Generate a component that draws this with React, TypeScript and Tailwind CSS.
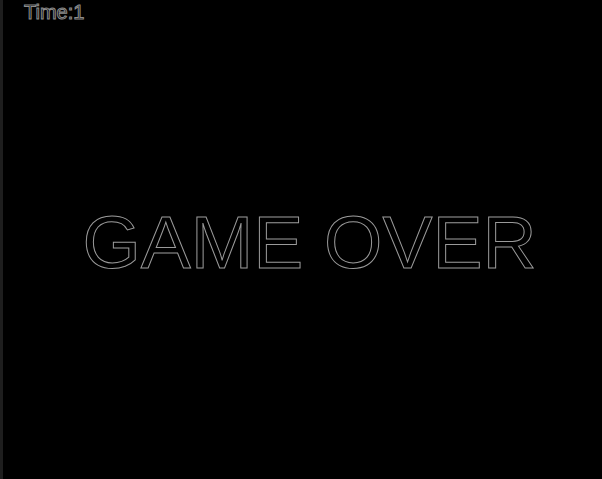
import React from 'react';

const outline = '[-webkit-text-stroke:1px_#9a9a9a] text-transparent';

export default function App() {
  return (
    <div className="flex h-[479px] w-[602px] bg-black font-['Liberation_Sans',Arial,sans-serif] antialiased">
      <div className="w-[3px] bg-[#1e1e1e]" />
      <div className="relative flex flex-1 flex-col">
        <div className={`pl-[21px] pt-[1px] text-[20px] leading-[23px] [-webkit-text-stroke:1px_#8c8c8c] text-transparent`}>Time:1</div>
        <div className="flex flex-1 items-center justify-center pb-[18px] pl-[14px]">
          <span className={`text-[75px] leading-none ${outline}`}>GAME OVER</span>
        </div>
      </div>
    </div>
  );
}
